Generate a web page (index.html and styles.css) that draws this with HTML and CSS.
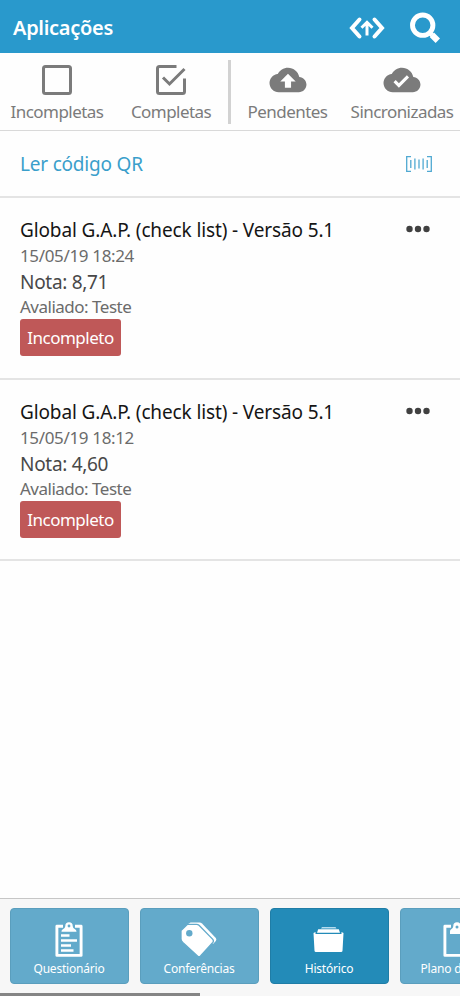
FILE: index.html
```html
<!DOCTYPE html>
<html lang="pt-BR">
<head>
    <meta charset="UTF-8">
    <meta name="viewport" content="width=device-width, initial-scale=1.0">
    <title>Aplicações</title>
    <link rel="stylesheet" href="styles.css">
</head>
<body>

    <!-- Header -->
    <header class="header">
        <h1>Aplicações</h1>
        <svg class="icon-sync" width="36" height="24" viewBox="0 0 36 24" fill="none" stroke="#fff">
            <path d="M10.500 3.500 L3 12 L10.500 20.500 M25.500 3.500 L33 12 L25.500 20.500" stroke-width="4" stroke-linecap="round"/>
            <path d="M18 19.500 V6.500 M12.500 11.800 L18 6.300 L23.500 11.800" stroke-width="3"/>
        </svg>
        <svg class="icon-search" width="32" height="32" viewBox="0 0 32 32" fill="none" stroke="#fff">
            <circle cx="13.700" cy="13.200" r="10.200" stroke-width="4.900"/>
            <path d="M20 20 L23 23" stroke-width="4.500"/>
            <path d="M22.800 22.800 L28.800 28.800" stroke-width="6.200"/>
        </svg>
    </header>

    <!-- Filters -->
    <nav class="filters">
        <a class="filter">
            <svg width="40" height="34" viewBox="0 0 40 34" fill="none" stroke="#7b7b7b" stroke-width="3">
                <rect x="6.500" y="3.500" width="27" height="27" rx="2"/>
            </svg>
            <span>Incompletas</span>
        </a>
        <a class="filter">
            <svg width="40" height="34" viewBox="0 0 40 34" fill="none" stroke="#7b7b7b" stroke-width="3">
                <path d="M25.500 3.500 H8.500 Q6.500 3.500 6.500 5.500 V28.500 Q6.500 30.500 8.500 30.500 H31.500 Q33.500 30.500 33.500 28.500 V15.500"/>
                <path d="M12 14.500 L18.500 21 L33.500 6"/>
            </svg>
            <span>Completas</span>
        </a>
        <div class="divider"></div>
        <a class="filter">
            <svg width="40" height="34" viewBox="0 0 40 34" fill="#7b7b7b">
                <path transform="translate(1.500 -1.500) scale(1.540)" d="M19.350 10.040C18.670 6.590 15.640 4 12 4 9.110 4 6.600 5.640 5.350 8.040 2.340 8.360 0 10.910 0 14c0 3.310 2.690 6 6 6h13c2.760 0 5-2.240 5-5 0-2.640-2.050-4.780-4.650-4.960zM14 13v4h-4v-4H7l5-5 5 5h-3z"/>
            </svg>
            <span>Pendentes</span>
        </a>
        <a class="filter">
            <svg width="40" height="34" viewBox="0 0 40 34" fill="#7b7b7b">
                <path transform="translate(1.500 -1.500) scale(1.540)" d="M19.350 10.040C18.670 6.590 15.640 4 12 4 9.110 4 6.600 5.640 5.350 8.040 2.340 8.360 0 10.910 0 14c0 3.310 2.690 6 6 6h13c2.760 0 5-2.240 5-5 0-2.640-2.050-4.780-4.650-4.960zM10 17l-3.500-3.500 1.410-1.410L10 14.170 15.180 9l1.410 1.410L10 17z"/>
            </svg>
            <span>Sincronizadas</span>
        </a>
    </nav>

    <!-- QR code -->
    <div class="qr-row">
        <span>Ler código QR</span>
        <svg width="26" height="16" viewBox="0 0 26 16" fill="none" stroke="#50a9d2" stroke-width="1.300">
            <path d="M5 .7 H.7 V15.300 H5 M21 .7 H25.300 V15.300 H21"/>
            <path d="M4.800 4 V12 M8.900 2.500 V13.500 M13 3.500 V12.500 M17.100 2.500 V13.500 M21.200 4 V12"/>
        </svg>
    </div>

    <!-- List -->
    <main class="list">
        <div class="item">
            <div class="item-info">
                <h2>Global G.A.P. (check list) - Versão 5.1</h2>
                <p class="date">15/05/19 18:24</p>
                <p class="score">Nota: 8,71</p>
                <p class="subject">Avaliado: Teste</p>
                <span class="badge">Incompleto</span>
            </div>
            <svg class="more" width="24" height="8" viewBox="0 0 24 8" fill="#414141">
                <circle cx="3.500" cy="4" r="3.200"/>
                <circle cx="12" cy="4" r="3.200"/>
                <circle cx="20.500" cy="4" r="3.200"/>
            </svg>
        </div>
        <div class="item">
            <div class="item-info">
                <h2>Global G.A.P. (check list) - Versão 5.1</h2>
                <p class="date">15/05/19 18:12</p>
                <p class="score">Nota: 4,60</p>
                <p class="subject">Avaliado: Teste</p>
                <span class="badge">Incompleto</span>
            </div>
            <svg class="more" width="24" height="8" viewBox="0 0 24 8" fill="#414141">
                <circle cx="3.500" cy="4" r="3.200"/>
                <circle cx="12" cy="4" r="3.200"/>
                <circle cx="20.500" cy="4" r="3.200"/>
            </svg>
        </div>
    </main>

    <!-- Bottom tabs -->
    <footer class="footer">
        <nav class="tabs">
            <a class="tab">
                <svg width="36" height="36" viewBox="0 0 36 36">
                    <path d="M12 4.300 H5.900 V33.400 H30.100 V4.300 H24" fill="none" stroke="#fff" stroke-width="2.900" stroke-linejoin="round"/>
                    <path d="M10.500 9.800 C10.500 6.500 14 7.500 14.300 4 A3.700 3.700 0 0 1 21.700 4 C22 7.500 25.500 6.500 25.500 9.800 Z" fill="#fff"/>
                    <circle cx="18" cy="4" r="1.400" fill="#63aacb"/>
                    <path d="M10 13.500 H18.500 M10 18.500 H26 M10 23.500 H20 M10 28.500 H22.500" stroke="#fff" stroke-width="2.300"/>
                </svg>
                <span>Questionário</span>
            </a>
            <a class="tab">
                <svg width="36" height="36" viewBox="0 0 36 36">
                    <path d="M5.500 3 L9.500 .5 H18.500 Q20 .5 21 1.500 L34.800 16 Q35.900 17.500 34.800 19 L32 22 Z" fill="#fff"/>
                    <path d="M0 8.500 L6.500 2.300 H15.500 Q17 2.300 18 3.300 L31.800 17.300 Q33 19 31.800 20.500 L19.500 34 Q18 35.500 16.500 34 L1.800 20.500 Q0 18.700 0 17 Z" fill="#fff" stroke="#63aacb" stroke-width="1.300"/>
                    <circle cx="8.300" cy="11.300" r="3.200" fill="#63aacb"/>
                </svg>
                <span>Conferências</span>
            </a>
            <a class="tab active">
                <svg width="36" height="36" viewBox="0 0 36 36">
                    <path d="M11 5 H24.500 L25.500 6.500 H10 Z" fill="#b5dcee"/>
                    <path d="M7.200 7.300 H27.800 L29 10.800 H6 Z" fill="#fff"/>
                    <path d="M2.500 11 L4.500 10 V12 H30.500 V10 L32.500 11 L31.500 28.700 Q31.400 30 30.100 30 H4.900 Q3.600 30 3.500 28.700 Z" fill="#fff"/>
                </svg>
                <span>Histórico</span>
            </a>
            <a class="tab">
                <svg class="icon-plan" width="36" height="36" viewBox="0 0 36 36">
                    <path d="M12 4.300 H5.900 V33.400 H30.100 V4.300 H24" fill="none" stroke="#fff" stroke-width="2.900" stroke-linejoin="round"/>
                    <path d="M11 12 V9.800 C11 6.500 14 7.500 14.300 4 A3.700 3.700 0 0 1 21.700 4 C22 7.500 25 6.500 25 9.800 V12 Z" fill="#fff"/>
                    <circle cx="18" cy="5" r="1.500" fill="#63aacb"/>
                </svg>
                <span>Plano de Ação</span>
            </a>
        </nav>
        <div class="scroll-thumb"></div>
    </footer>

</body>
</html>
```

FILE: styles.css
```css
* {
    box-sizing: border-box;
}

body {
    margin: 0;
    height: 996px;
    display: flex;
    flex-direction: column;
    overflow: hidden;
    background-color: #fefefe;
    font-family: "Noto Sans", "Open Sans", sans-serif;
}

h1, h2, p {
    margin: 0;
    font-weight: normal;
}

svg {
    display: block;
    flex: none;
}

span, h1, h2, p {
    white-space: nowrap;
}

.header {
    height: 53px;
    display: flex;
    align-items: center;
    padding: 2px 19px 0 13px;
    background-color: #2999cc;
    color: #fff;
}

.header h1 {
    flex: 1;
    font-size: 20px;
    font-weight: 600;
    letter-spacing: -0.3px;
}

.icon-search {
    margin-left: 24px;
}

.filters {
    height: 78px;
    display: grid;
    grid-template-columns: 114px 114px 3px 113px 116px;
    border-bottom: 1px solid #d9d9d9;
    color: #7b7b7b;
}

.filter {
    display: flex;
    flex-direction: column;
    align-items: center;
    padding-top: 10px;
}

.filter span {
    font-size: 17px;
    line-height: 24px;
    margin-top: 3px;
    letter-spacing: -0.55px;
}

.divider {
    height: 64px;
    margin-top: 7px;
    background-color: #d2d2d2;
}

.qr-row {
    height: 67px;
    display: flex;
    align-items: center;
    justify-content: space-between;
    padding: 0 28px 0 20px;
    border-bottom: 2px solid #e4e4e4;
    color: #3a9fcb;
    font-size: 19px;
    letter-spacing: -0.2px;
}

.list {
    flex: 1;
}

.item {
    height: 181.5px;
    display: flex;
    justify-content: space-between;
    padding: 18px 30px 0 20px;
    border-bottom: 2px solid #e4e4e4;
}

.item h2 {
    font-size: 19px;
    line-height: 28px;
    letter-spacing: -0.13px;
    color: #151515;
}

.date, .subject {
    font-size: 17px;
    line-height: 23px;
    letter-spacing: -0.35px;
    color: #6b6b6b;
}

.score {
    font-size: 19px;
    line-height: 31px;
    letter-spacing: -0.3px;
    color: #484848;
}

.subject {
    line-height: 17px;
    letter-spacing: -0.5px;
}

.badge {
    display: block;
    width: 101px;
    height: 37px;
    margin-top: 4px;
    border-radius: 3px;
    background-color: #bf5858;
    color: #fff;
    font-size: 17px;
    line-height: 37px;
    letter-spacing: -0.5px;
    text-align: center;
}

.more {
    margin-top: 9px;
}

.footer {
    height: 98px;
    border-top: 1px solid #c6c6c6;
    background-color: #f7f7f7;
}

.tabs {
    display: flex;
    gap: 11px;
    height: 94px;
    padding: 9px 0 0 10px;
    overflow: hidden;
}

.tab {
    flex: none;
    width: 119px;
    height: 76px;
    display: flex;
    flex-direction: column;
    align-items: center;
    padding: 13px 1px 0 0;
    border: 1px solid #5a9ebd;
    border-radius: 4px;
    background-color: #63aacb;
    color: #fff;
}

.tab span {
    font-size: 12px;
    line-height: 18px;
    margin-top: 2px;
    letter-spacing: -0.2px;
}

.tab.active {
    background-color: #238bb8;
    border-color: #1f7da6;
}

.icon-plan {
    margin-right: 4px;
}

.scroll-thumb {
    width: 200px;
    height: 3px;
    background-color: #858585;
}
```
